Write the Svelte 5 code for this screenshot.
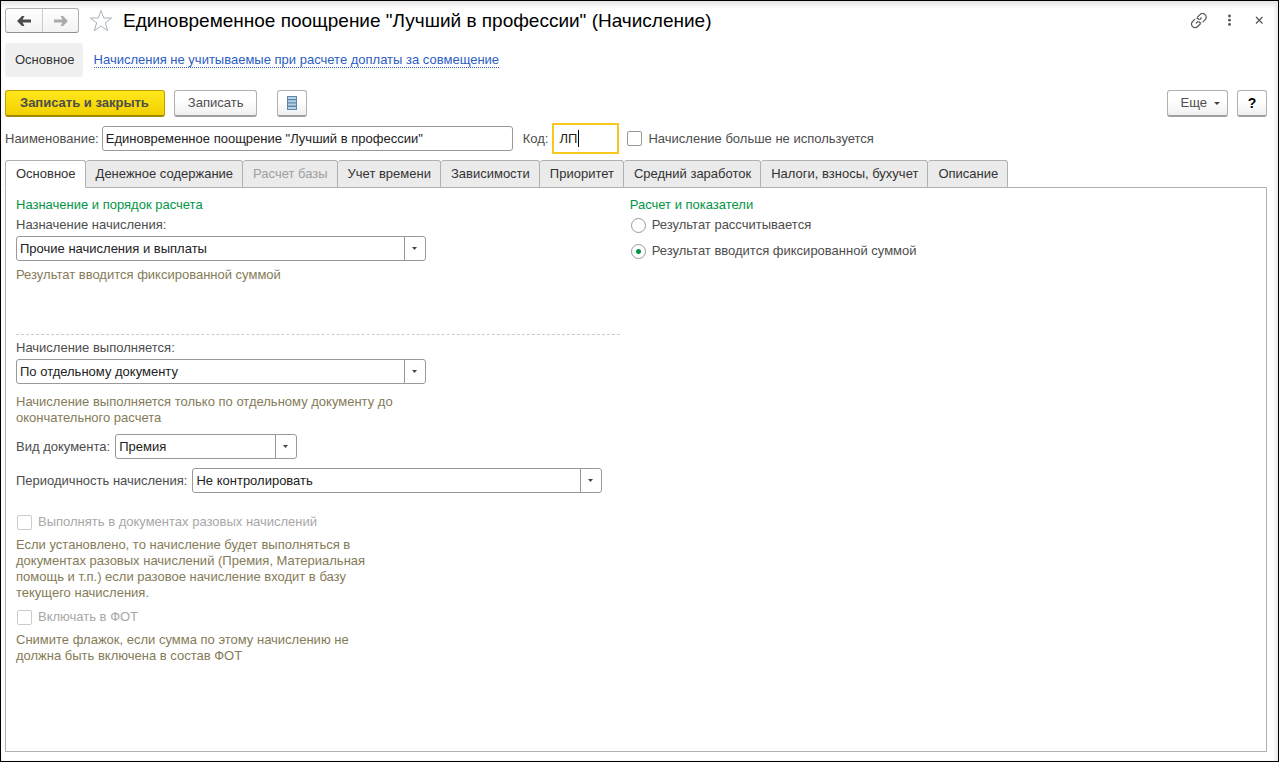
<script lang="ts">
  interface Tab {
    id: string;
    title: string;
    disabled?: boolean;
  }

  const tabs: Tab[] = [
    { id: "main", title: "Основное" },
    { id: "money", title: "Денежное содержание" },
    { id: "base", title: "Расчет базы", disabled: true },
    { id: "time", title: "Учет времени" },
    { id: "deps", title: "Зависимости" },
    { id: "priority", title: "Приоритет" },
    { id: "average", title: "Средний заработок" },
    { id: "taxes", title: "Налоги, взносы, бухучет" },
    { id: "about", title: "Описание" },
  ];

  let activeTab = $state("main");
  let name = $state('Единовременное поощрение "Лучший в профессии"');
  let code = $state("ЛП");
  let unused = $state(false);
  let result = $state("fixed");
</script>

{#snippet combo(id: string, value: string, size: string)}
  <span class="combo {size}">
    <select {id}>
      <option>{value}</option>
    </select>
    <span class="combo-arrow">
      <svg width="5" height="3" viewBox="0 0 5 3"><path d="M0 0h5L2.500 3z" fill="#444" /></svg>
    </span>
  </span>
{/snippet}

<div class="window">
  <header>
    <div class="history">
      <button type="button" aria-label="Назад">
        <svg width="14" height="12" viewBox="0 0 14 12" fill="#4a4a4a">
          <path d="M0 6L5 1H7.500L5.500 4.500H14V7.500H5.500L7.500 11H5z" />
        </svg>
      </button>
      <button type="button" aria-label="Вперед">
        <svg width="14" height="12" viewBox="0 0 14 12" fill="#aaa">
          <path d="M14 6L9 1H6.500L8.500 4.500H0V7.500H8.500L6.500 11H9z" />
        </svg>
      </button>
    </div>
    <button type="button" class="icon star" aria-label="Избранное">
      <svg width="24" height="24" viewBox="0 0 24 24" fill="#fff" stroke="#a9b1ba">
        <path d="M12 1.500L14.700 9H22.700L16.300 13.800 18.700 21.700 12 17 5.300 21.700 7.700 13.800 1.300 9H9.300z" />
      </svg>
    </button>
    <h1>Единовременное поощрение "Лучший в профессии" (Начисление)</h1>
    <div class="window-tools">
      <button type="button" class="icon" aria-label="Ссылка">
        <svg width="16" height="16" viewBox="0 0 16 16" fill="none" stroke="#555" stroke-width="1.200" stroke-linecap="round">
          <path d="M6.500 4.200L9 1.700C10.500.2 12.700.2 14.100 1.600C15.600 3 15.600 5.300 14.100 6.700L12 8.800" />
          <path d="M9.800 9.800C9.100 9.700 8.500 9.500 8 9" />
          <path d="M9.200 11L6.700 13.500C5.200 15 3 15 1.600 13.600C.1 12.200.1 9.900 1.600 8.500L3.700 6.400" />
          <path d="M5.900 5.400C6.600 5.500 7.200 5.700 7.700 6.200" />
          <path d="M5.300 10L7 8.300M8.700 6.600L10.300 5" />
        </svg>
      </button>
      <button type="button" class="icon" aria-label="Меню">
        <svg width="16" height="16" viewBox="0 0 16 16" fill="#555">
          <circle cx="8.500" cy="3" r="1.400" />
          <circle cx="8.500" cy="7.200" r="1.400" />
          <circle cx="8.500" cy="11.400" r="1.400" />
        </svg>
      </button>
      <button type="button" class="icon" aria-label="Закрыть">
        <svg width="16" height="16" viewBox="0 0 16 16" stroke="#555" stroke-width="1.200">
          <path d="M5 4L11.500 10.500M11.500 4L5 10.500" />
        </svg>
      </button>
    </div>
  </header>

  <nav>
    <span class="current">Основное</span>
    <a href="#excluded">Начисления не учитываемые при расчете доплаты за совмещение</a>
  </nav>

  <div class="toolbar">
    <button type="button" class="btn primary">Записать и закрыть</button>
    <button type="button" class="btn">Записать</button>
    <button type="button" class="btn square list" aria-label="Список">
      <svg width="10" height="14" viewBox="0 0 10 14">
        <path d="M0 0h10v14H0z" fill="#5b86a8" />
        <path d="M1 2h8M1 5.300h8M1 8.600h8M1 12h8" stroke="#b5d3e8" stroke-width="2" />
      </svg>
    </button>
    <button type="button" class="btn more">
      Еще
      <svg width="6" height="3" viewBox="0 0 6 3"><path d="M0 0h6L3 3z" fill="#444" /></svg>
    </button>
    <button type="button" class="btn square help">?</button>
  </div>

  <div class="fields">
    <label for="name">Наименование:</label>
    <input id="name" class="name" type="text" bind:value={name} />
    <label for="code" class="code-label">Код:</label>
    <span class="code">
      <input id="code" type="text" bind:value={code} />
      <span class="caret"></span>
    </span>
    <label class="check">
      <input type="checkbox" bind:checked={unused} />
      Начисление больше не используется
    </label>
  </div>

  <div class="tabs" role="tablist">
    {#each tabs as tab (tab.id)}
      <button
        type="button"
        role="tab"
        aria-selected={tab.id === activeTab}
        class:active={tab.id === activeTab}
        disabled={tab.disabled}
        onclick={() => (activeTab = tab.id)}
      >
        {tab.title}
      </button>
    {/each}
  </div>

  <main>
    <section>
      <h2>Назначение и порядок расчета</h2>
      <div class="stack purpose">
        <label for="purpose">Назначение начисления:</label>
        {@render combo("purpose", "Прочие начисления и выплаты", "wide")}
        <p>Результат вводится фиксированной суммой</p>
      </div>
      <div class="stack">
        <label for="method">Начисление выполняется:</label>
        {@render combo("method", "По отдельному документу", "wide")}
      </div>
      <p class="note">Начисление выполняется только по отдельному документу до окончательного расчета</p>
      <div class="row">
        <label for="document">Вид документа:</label>
        {@render combo("document", "Премия", "short")}
      </div>
      <div class="row">
        <label for="period">Периодичность начисления:</label>
        {@render combo("period", "Не контролировать", "wide")}
      </div>
      <div class="option first">
        <label class="check">
          <input type="checkbox" disabled />
          Выполнять в документах разовых начислений
        </label>
        <p>
          Если установлено, то начисление будет выполняться в документах разовых начислений (Премия,
          Материальная помощь и т.п.) если разовое начисление входит в базу текущего начисления.
        </p>
      </div>
      <div class="option">
        <label class="check">
          <input type="checkbox" disabled />
          Включать в ФОТ
        </label>
        <p>Снимите флажок, если сумма по этому начислению не должна быть включена в состав ФОТ</p>
      </div>
    </section>

    <section>
      <h2>Расчет и показатели</h2>
      <div class="radios">
        <label class="check">
          <input type="radio" name="result" value="calculated" bind:group={result} />
          Результат рассчитывается
        </label>
        <label class="check">
          <input type="radio" name="result" value="fixed" bind:group={result} />
          Результат вводится фиксированной суммой
        </label>
      </div>
    </section>
  </main>
</div>

<style>
  .window {
    display: flex;
    flex-direction: column;
    box-sizing: border-box;
    min-height: 100vh;
    padding: 7px 11px 9px 4px;
    border: 1px solid #000;
    background: #fff;
    box-shadow:
      inset 0 5px 4px -1px #e8e6e8,
      inset -3px 0 3px #eee;
    color: #4d4d4d;
    font: 13px/16px "Liberation Sans", Arial, sans-serif;
  }

  button,
  input,
  select {
    box-sizing: border-box;
    margin: 0;
    color: inherit;
    font: inherit;
  }

  h1,
  h2,
  p {
    margin: 0;
    font-weight: normal;
  }

  header {
    display: flex;
    align-items: center;
  }

  .history {
    display: flex;
    border: 1px solid #b0b0b0;
    border-bottom-color: #909090;
    border-radius: 3px;
    background: linear-gradient(#fff, #f2f2f2);
  }

  .history button {
    display: flex;
    align-items: center;
    justify-content: center;
    width: 36px;
    height: 23px;
    padding: 0;
    border: 0;
    background: none;
  }

  .history button + button {
    border-left: 1px solid #ccc;
  }

  .icon {
    display: flex;
    padding: 0;
    border: 0;
    background: none;
  }

  .star {
    margin: 0 10px;
  }

  h1 {
    color: #000;
    font-size: 19px;
    line-height: 24px;
  }

  .window-tools {
    display: flex;
    gap: 14px;
    margin-left: auto;
  }

  nav {
    display: flex;
    align-items: center;
    gap: 11px;
    margin-top: 10px;
  }

  .current {
    padding: 9px 8px 9px 10px;
    border-radius: 3px;
    background: #f0f0f0;
    color: #333;
  }

  a {
    border-bottom: 1px dotted #2a5cc4;
    color: #2a5cc4;
    line-height: 14px;
    text-decoration: none;
  }

  .toolbar {
    display: flex;
    gap: 9px;
    margin-top: 13px;
  }

  .btn {
    display: flex;
    align-items: center;
    justify-content: center;
    height: 27px;
    padding: 0 13px;
    border: 1px solid #b0b0b0;
    border-bottom: 2px solid #a0a0a0;
    border-radius: 3px;
    background: linear-gradient(#fff 40%, #f0f0f0);
  }

  .primary {
    padding: 0 15px 0 14px;
    border-color: #c0a000;
    border-bottom-color: #a08800;
    background: linear-gradient(#ffe81a, #f2d000);
    font-weight: bold;
  }

  .square {
    width: 30px;
    padding: 0;
  }

  .list {
    margin-left: 11px;
  }

  .more {
    gap: 7px;
    margin-left: auto;
    padding: 0 7px 0 13px;
  }

  .help {
    color: #000;
    font-size: 14px;
    font-weight: bold;
  }

  .fields {
    display: flex;
    align-items: center;
    margin-top: 6px;
  }

  .name {
    width: 411px;
    height: 25px;
    margin-left: 3px;
    padding: 0 3px;
    border: 1px solid #999;
    border-radius: 3px;
    color: #222;
  }

  .code-label {
    margin-left: 10px;
  }

  .code {
    position: relative;
    margin: 0 8px 0 4px;
  }

  .code input {
    display: block;
    width: 67px;
    height: 31px;
    padding: 0 5px;
    border: 2px solid #f8c820;
    outline: 0;
    color: #222;
  }

  .caret {
    position: absolute;
    top: 7px;
    left: 26px;
    width: 1px;
    height: 17px;
    background: #000;
  }

  .check {
    display: flex;
    align-items: center;
    gap: 6px;
  }

  .check input {
    width: 15px;
    height: 15px;
    border: 1px solid #999;
    border-radius: 2px;
    background: #fff;
    appearance: none;
  }

  .check input[type="radio"] {
    border-radius: 50%;
  }

  .check input[type="checkbox"]:checked {
    background: #009646;
  }

  .check input[type="radio"]:checked {
    background: radial-gradient(circle, #009646 2px, #fff 3px);
  }

  .check:has(:disabled) {
    color: #a8a8a8;
  }

  .check input:disabled {
    border-color: #ccc;
  }

  /* The selected tab covers the top edge of the panel */
  .tabs {
    z-index: 1;
    display: flex;
    margin-top: 6px;
  }

  .tabs button {
    height: 28px;
    padding: 0 9px 0 10px;
    border: 1px solid #b0b0b0;
    border-left-width: 0;
    border-radius: 3px 3px 0 0;
    background: #ebebeb;
    color: #333;
    white-space: nowrap;
  }

  .tabs button:first-child {
    border-left-width: 1px;
  }

  .tabs .active {
    border-bottom-color: #fff;
    background: #fff;
  }

  .tabs button:disabled {
    color: #a0a0a0;
  }

  main {
    display: grid;
    flex: 1;
    grid-template-columns: 49fr 51fr;
    gap: 10px;
    margin-top: -1px;
    padding: 9px 8px 9px 10px;
    border: 1px solid #b0b0b0;
  }

  h2 {
    margin-bottom: 4px;
    color: #009646;
    font-size: 13px;
  }

  .stack {
    display: flex;
    flex-direction: column;
    align-items: flex-start;
    gap: 3px;
  }

  .purpose {
    min-height: 117px;
    margin-bottom: 5px;
    border-bottom: 1px dashed #ccc;
  }

  .combo {
    display: grid;
    grid-template-columns: 1fr 22px;
    height: 25px;
  }

  .wide {
    width: 410px;
  }

  .short {
    width: 182px;
  }

  .combo select {
    grid-area: 1 / 1 / 2 / 3;
    padding: 0 24px 0 3px;
    border: 1px solid #999;
    border-radius: 3px;
    background: #fff;
    color: #222;
    appearance: none;
  }

  .combo-arrow {
    display: flex;
    grid-area: 1 / 2;
    align-items: center;
    justify-content: center;
    padding-right: 2px;
    border-left: 1px solid #999;
    pointer-events: none;
  }

  p {
    color: #857b58;
  }

  .stack p {
    margin-top: 3px;
  }

  .note {
    max-width: 390px;
    margin-top: 10px;
  }

  .row {
    display: flex;
    align-items: center;
    gap: 5px;
    margin-top: 9px;
  }

  .note + .row {
    margin-top: 8px;
  }

  .option {
    margin-top: 8px;
  }

  .first {
    margin-top: 21px;
  }

  .option .check {
    margin-left: 1px;
  }

  .option p {
    max-width: 350px;
    margin-top: 7px;
  }

  .radios {
    display: flex;
    flex-direction: column;
    gap: 10px;
    margin-left: 1px;
  }
</style>
